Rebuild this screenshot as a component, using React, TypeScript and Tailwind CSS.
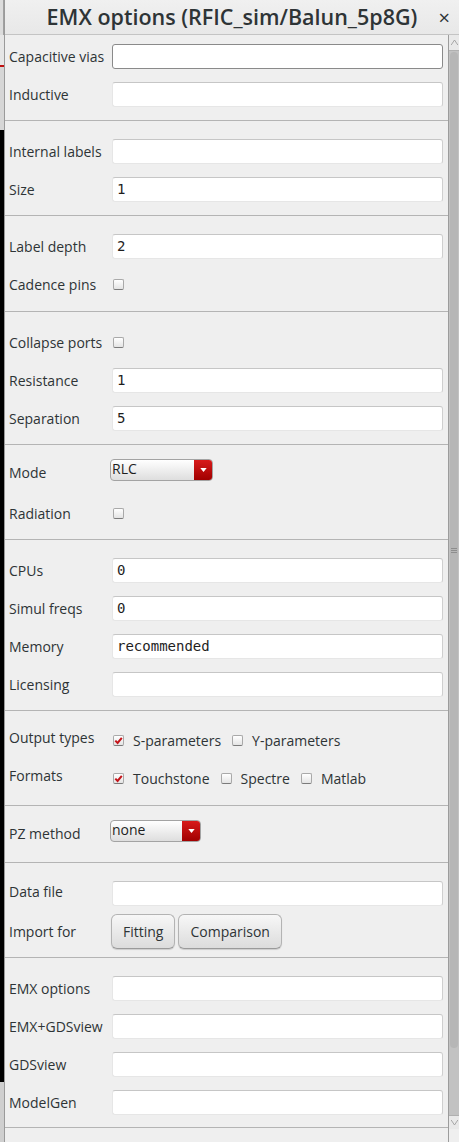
import React from "react";

type Row =
  | { kind: "input"; label: string; value?: string; focus?: boolean }
  | { kind: "check"; label: string }
  | { kind: "select"; label: string; value: string; width: string }
  | { kind: "checks"; label: string; items: { text: string; on: boolean }[] }
  | { kind: "buttons"; label: string; items: string[] };

const sections: Row[][] = [
  [
    { kind: "input", label: "Capacitive vias", focus: true },
    { kind: "input", label: "Inductive" },
  ],
  [
    { kind: "input", label: "Internal labels" },
    { kind: "input", label: "Size", value: "1" },
  ],
  [
    { kind: "input", label: "Label depth", value: "2" },
    { kind: "check", label: "Cadence pins" },
  ],
  [
    { kind: "check", label: "Collapse ports" },
    { kind: "input", label: "Resistance", value: "1" },
    { kind: "input", label: "Separation", value: "5" },
  ],
  [
    { kind: "select", label: "Mode", value: "RLC", width: "w-[103px]" },
    { kind: "check", label: "Radiation" },
  ],
  [
    { kind: "input", label: "CPUs", value: "0" },
    { kind: "input", label: "Simul freqs", value: "0" },
    { kind: "input", label: "Memory", value: "recommended" },
    { kind: "input", label: "Licensing" },
  ],
  [
    {
      kind: "checks",
      label: "Output types",
      items: [
        { text: "S-parameters", on: true },
        { text: "Y-parameters", on: false },
      ],
    },
    {
      kind: "checks",
      label: "Formats",
      items: [
        { text: "Touchstone", on: true },
        { text: "Spectre", on: false },
        { text: "Matlab", on: false },
      ],
    },
  ],
  [{ kind: "select", label: "PZ method", value: "none", width: "w-[91px]" }],
  [
    { kind: "input", label: "Data file" },
    { kind: "buttons", label: "Import for", items: ["Fitting", "Comparison"] },
  ],
  [
    { kind: "input", label: "EMX options" },
    { kind: "input", label: "EMX+GDSview" },
    { kind: "input", label: "GDSview" },
    { kind: "input", label: "ModelGen" },
  ],
];

// per-section padding so the dividers land where the dialog draws them
const sectionPad = [
  "pt-[2px] pb-[7px]",
  "pt-[11px] pb-[7px]",
  "pt-[11px] pb-[8px]",
  "pt-[11px] pb-[7px]",
  "pt-[11px] pb-[7px]",
  "pt-[11px] pb-[7px]",
  "pt-[11px] pb-[7px]",
  "pt-[11px] pb-[7px]",
  "pt-[11px] pb-[7px]",
  "pt-[11px] pb-[6px]",
];

function CheckBox({ on }: { on: boolean }) {
  return (
    <span className="relative inline-block w-[11px] h-[11px] rounded-[2px] border border-[#a9a9a9] border-b-[#7a7a7a] bg-gradient-to-b from-white to-[#e4e4e4] shrink-0">
      {on && (
        <svg viewBox="0 0 11 11" className="absolute left-[-1px] top-[-1px] w-[11px] h-[11px]">
          <path d="M2.3 5.6 L4.6 8 L8.8 2.8" fill="none" stroke="#c4141a" strokeWidth="2" />
        </svg>
      )}
    </span>
  );
}

function Field({ row }: { row: Row }) {
  if (row.kind === "input") {
    return (
      <div
        className={
          "flex-1 h-[25px] bg-white rounded-[3px] flex items-center pl-[4px] font-['DejaVu_Sans_Mono',monospace] text-[14px] text-[#1e1e1e] " +
          (row.focus
            ? "border border-[#8a8a8a]"
            : "border border-[#e6e6e6] border-t-[#c6c6c6] border-r-[#cfcfcf]")
        }
      >
        {row.value}
      </div>
    );
  }
  if (row.kind === "check") {
    return (
      <div className="flex items-center pl-[1px]">
        <CheckBox on={false} />
      </div>
    );
  }
  if (row.kind === "select") {
    return (
      <div
        className={`${row.width} h-[22px] -ml-[2px] -translate-y-[5px] flex items-stretch rounded-[4px] border border-[#a3a3a3] bg-gradient-to-b from-white to-[#dedede] overflow-hidden`}
      >
        <span className="flex-1 pl-[1px] text-[14px] leading-[18px] text-[#1e1e1e]">{row.value}</span>
        <span className="w-[18px] flex items-center justify-center bg-gradient-to-b from-[#d81a1a] to-[#a10000]">
          <svg viewBox="0 0 8 5" className="w-[7px] h-[4px]">
            <path d="M0 0 H8 L4 5 Z" fill="#ffffff" />
          </svg>
        </span>
      </div>
    );
  }
  if (row.kind === "checks") {
    return (
      <div className="flex items-center gap-[11px] pl-[1px] -translate-y-[1px]">
        {row.items.map((it) => (
          <div key={it.text} className="flex items-center gap-[9px]">
            <CheckBox on={it.on} />
            <span className="text-[14px] text-[#2e3436]">{it.text}</span>
          </div>
        ))}
      </div>
    );
  }
  return (
    <div className="flex items-center gap-[3px] -ml-[1px]">
      {row.items.map((b) => (
        <button
          key={b}
          className="h-[35px] px-[11px] rounded-[6px] border border-[#b3b3b3] border-b-[#9a9a9a] bg-gradient-to-b from-[#f7f7f7] to-[#dcdcdc] text-[14px] text-[#2e3436] shadow-[0_1px_1px_rgba(0,0,0,0.15)]"
        >
          {b}
        </button>
      ))}
    </div>
  );
}

function labelShift(row: Row) {
  if (row.kind === "select") return "-translate-y-[3px]";
  if (row.kind === "checks") return "-translate-y-[4px]";
  if (row.label === "Data file") return "-translate-y-[2px]";
  return "";
}

export default function App() {
  return (
    <div className="flex w-[459px] h-[1142px] overflow-hidden font-['Open_Sans',sans-serif] text-[#2e3436]">
      {/* background window peeking on the left */}
      <div className="w-[4px] flex flex-col shrink-0">
        <div className="h-[35px] bg-[#dcdcdc] border-r border-[#a0a0a0]" />
        <div className="h-[30px] bg-[#e6e6e6]" />
        <div className="h-[2px] bg-[#c01010]" />
        <div className="h-[63px] bg-[#d6d6d6]" />
        <div className="flex-1 bg-black" />
        <div className="h-[60px] bg-[#cfcfcf]" />
      </div>

      <div className="flex-1 flex flex-col bg-[#efefef] border-l border-[#9a9a9a]">
        {/* Title bar */}
        <div className="h-[35px] shrink-0 flex items-center border-b border-[#c4c4c4] bg-gradient-to-b from-[#f0f0f0] to-[#e8e8e8] relative">
          <div className="flex-1 text-center text-[21.5px] leading-[28px] font-semibold text-[#2e3436]">
            EMX options (RFIC_sim/Balun_5p8G)
          </div>
          <span className="absolute right-[9px] top-[3px] text-[20px] font-normal text-[#2e3436]">×</span>
        </div>

        <div className="flex-1 flex">
          {/* Form */}
          <div className="flex-1 flex flex-col">
            {sections.map((sec, i) => (
              <div key={i} className={sectionPad[i] + " border-b border-[#b4b4b4]"}>
                {sec.map((row) => (
                  <div key={row.label} className="h-[38px] flex items-center pr-[5px]">
                    <div
                      className={
                        "w-[107px] shrink-0 pl-[4px] text-[14px] text-[#2e3436] whitespace-nowrap " +
                        labelShift(row)
                      }
                    >
                      {row.label}
                    </div>
                    <Field row={row} />
                  </div>
                ))}
              </div>
            ))}
          </div>

          {/* Scrollbar */}
          <div className="w-[11px] shrink-0 flex flex-col bg-[#c2c2c2] border-l border-[#9c9c9c]">
            <div className="h-[16px] flex items-center justify-center bg-[#e9e9e9] border-b border-[#b0b0b0]">
              <svg viewBox="0 0 8 6" className="w-[7px] h-[5px]">
                <path d="M0 6 L4 0 L8 6" fill="none" stroke="#9a9a9a" strokeWidth="1" />
              </svg>
            </div>
            <div className="h-[996px] mx-[1px] mt-[1px] rounded-[4px] bg-[#b6b6b6] flex items-center justify-center">
              <div className="flex flex-col gap-[1px]">
                <div className="w-[6px] h-[1px] bg-[#8d8d8d]" />
                <div className="w-[6px] h-[1px] bg-[#8d8d8d]" />
                <div className="w-[6px] h-[1px] bg-[#8d8d8d]" />
              </div>
            </div>
            <div className="flex-1" />
            <div className="h-[14px] flex items-center justify-center bg-[#e9e9e9] border-t border-[#b0b0b0]">
              <svg viewBox="0 0 8 6" className="w-[7px] h-[5px]">
                <path d="M0 0 L4 6 L8 0" fill="none" stroke="#9a9a9a" strokeWidth="1" />
              </svg>
            </div>
            <div className="h-[13px] bg-[#efefef]" />
          </div>
        </div>
      </div>
    </div>
  );
}
